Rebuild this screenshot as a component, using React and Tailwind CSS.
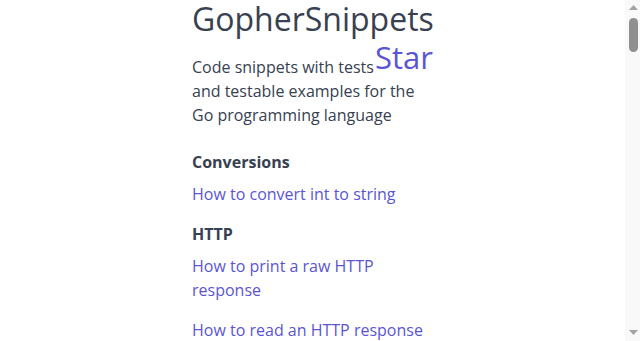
import React from 'react';

const sections = [
  { title: 'Conversions', links: ['How to convert int to string'] },
  { title: 'HTTP', links: ['How to print a raw HTTP response', 'How to read an HTTP response'] },
  { title: 'JSON', links: ['How to decode JSON', 'How to encode JSON'] },
];

function Arrow({ down }) {
  return (
    <svg width="9" height="5" viewBox="0 0 9 5" className="block">
      {down ? <path d="M0 0h9L4.5 5z" fill="#a3a3a3" /> : <path d="M0 5h9L4.5 0z" fill="#a3a3a3" />}
    </svg>
  );
}

export default function App() {
  return (
    <div className="flex h-[341px] overflow-hidden bg-white text-[#374151]" style={{ fontFamily: '"Open Sans", sans-serif' }}>
      <main className="flex-1 overflow-hidden">
        <div className="mx-auto w-[241px] pb-10">
          <h1 className="text-[32px] leading-[38px] font-normal">GopherSnippets</h1>
          <div className="mt-[17px]">
            <a href="#" className="float-right -mt-[15px] text-[31px] leading-[34px] text-[#5b55d3]">Star</a>
            <p className="text-base leading-6">
              Code snippets with tests and testable examples for the Go programming language
            </p>
          </div>
          <div className="mt-[23px] flex flex-col gap-[16px]">
            {sections.map((s) => (
              <section key={s.title}>
                <h2 className="text-base leading-6 font-bold">{s.title}</h2>
                <ul className="mt-2 flex flex-col gap-4">
                  {s.links.map((l) => (
                    <li key={l}>
                      <a href="#" className="text-base leading-6 text-[#5b55d3]">{l}</a>
                    </li>
                  ))}
                </ul>
              </section>
            ))}
          </div>
        </div>
      </main>
      {/* fake scrollbar */}
      <div className="flex w-[15px] flex-col items-center bg-[#f9f9f9] pl-[2px]">
        <div className="pt-[5px]"><Arrow /></div>
        <div className="mt-[8px] h-[34px] w-[9px] rounded-full bg-[#8f8f8f]" />
        <div className="flex-1" />
        <div className="pb-[6px]"><Arrow down /></div>
      </div>
    </div>
  );
}
